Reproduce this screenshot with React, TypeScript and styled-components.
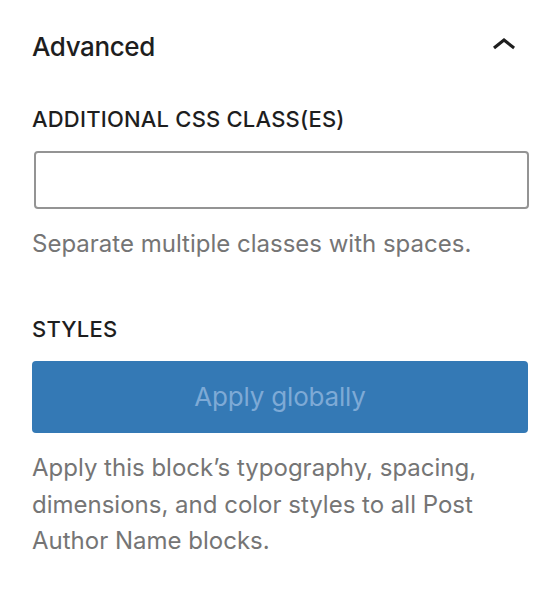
import React from "react";
import styled, { createGlobalStyle } from "styled-components";

const GlobalStyle = createGlobalStyle`
  html, body {
    margin: 0;
    padding: 0;
    background: #fff;
  }
  body {
    font-family: Inter, "Noto Sans", sans-serif;
    -webkit-font-smoothing: antialiased;
  }
`;

const ChevronUp: React.FC = () => (
  <svg width="48" height="48" viewBox="0 0 24 24" aria-hidden="true">
    <path d="M6.5 12.4L12 8l5.5 4.4-.9 1.2L12 10l-4.5 3.6-1-1.2z" fill="#1e1e1e" />
  </svg>
);

const App: React.FC = () => {
  return (
    <>
      <GlobalStyle />
      <Panel>
        <PanelHeader>
          <PanelTitle>Advanced</PanelTitle>
          <ToggleButton aria-label="Collapse">
            <ChevronUp />
          </ToggleButton>
        </PanelHeader>

        <Field>
          <Label htmlFor="css-classes">Additional CSS class(es)</Label>
          <TextInput id="css-classes" type="text" />
          <Help>Separate multiple classes with spaces.</Help>
        </Field>

        <Field $spaced>
          <Label as="div">Styles</Label>
          <ApplyButton disabled>Apply globally</ApplyButton>
          <Help $multiline>
            Apply this block’s typography, spacing, dimensions, and color
            styles to all Post Author Name blocks.
          </Help>
        </Field>
      </Panel>
    </>
  );
};

export default App;

const Panel = styled.div`
  padding: 22px 26px 40px 32px;
  display: flex;
  flex-direction: column;
`;

const PanelHeader = styled.div`
  display: flex;
  justify-content: space-between;
  align-items: center;
  height: 48px;
`;

const PanelTitle = styled.h2`
  margin: 1px 0 0;
  font-size: 26px;
  line-height: 32px;
  font-weight: 500;
  letter-spacing: -0.4px;
  color: #1e1e1e;
`;

const ToggleButton = styled.button`
  display: flex;
  padding: 0;
  border: none;
  background: none;
  cursor: pointer;
`;

const Field = styled.div<{ $spaced?: boolean }>`
  display: flex;
  flex-direction: column;
  margin-top: ${({ $spaced }) => ($spaced ? "52px" : "34px")};
`;

const Label = styled.label`
  font-size: 22px;
  line-height: 30px;
  font-weight: 500;
  letter-spacing: 0.2px;
  text-transform: uppercase;
  color: #1e1e1e;
  margin-bottom: 17px;
`;

const TextInput = styled.input`
  box-sizing: border-box;
  width: calc(100% - 1px);
  margin-left: 2px;
  height: 58px;
  border: 2px solid #949494;
  border-radius: 4px;
  font-size: 26px;
  padding: 0 16px;
  background: #fff;
  &:focus {
    outline: none;
    border-color: #3479b5;
  }
`;

const Help = styled.p<{ $multiline?: boolean }>`
  margin: 17px 0 0;
  font-size: 24px;
  line-height: ${({ $multiline }) => ($multiline ? "36.5px" : "36px")};
  color: #757575;
  max-width: 460px;
`;

const ApplyButton = styled.button`
  height: 72px;
  width: 100%;
  border: none;
  border-radius: 4px;
  background: #3479b5;
  color: #7eaad6;
  font-family: inherit;
  font-size: 26px;
  line-height: 32px;
  font-weight: 400;
  letter-spacing: -0.2px;
  cursor: default;
`;
